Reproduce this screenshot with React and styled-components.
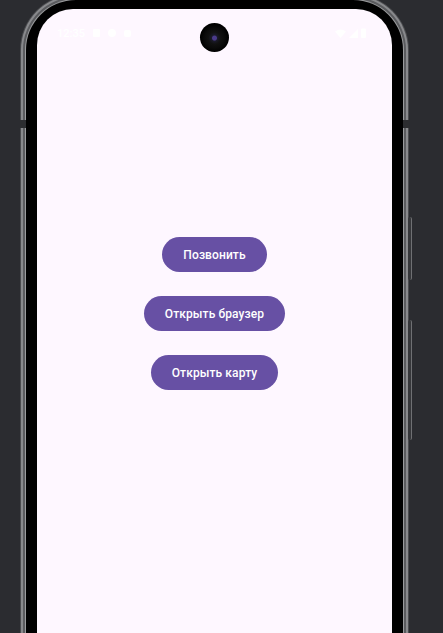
import React from "react";
import styled, { createGlobalStyle } from "styled-components";

const Global = createGlobalStyle`
  html, body { margin: 0; padding: 0; }
  body {
    background: #2b2c30;
    overflow: hidden;
    font-family: Roboto, "Noto Sans", sans-serif;
  }
`;

const Stage = styled.div`
  width: 443px;
  height: 633px;
  overflow: hidden;
  background: #2b2c30;
`;

const Bezel = styled.div`
  position: relative;
  margin-left: 26px;
  width: 377px;
  height: 700px;
  box-sizing: border-box;
  padding: 9px 11px 0 11px;
  background: #000;
  border-radius: 50px;
  box-shadow:
    0 0 0 1px #9a9b9d,
    0 0 0 3px #5a5b5e,
    0 0 0 5px #88898c,
    0 0 0 6px #4a4b4e;
`;

const AntennaBand = styled.div`
  position: absolute;
  top: 120px;
  width: 6px;
  height: 8px;
  background: #2c2d30;
  ${(p) => (p.$side === "left" ? "left: -6px;" : "right: -6px;")}
`;

const SideKey = styled.div`
  position: absolute;
  right: -9px;
  width: 3px;
  border-radius: 2px;
  background: #36373a;
  border-right: 1px solid #6f7073;
  top: ${(p) => p.$top}px;
  height: ${(p) => p.$h}px;
`;

const Screen = styled.div`
  position: relative;
  width: 355px;
  height: 700px;
  background: #fef7ff;
  border-radius: 36px 36px 0 0;
  overflow: hidden;
`;

const StatusBar = styled.div`
  height: 48px;
  box-sizing: border-box;
  padding: 17px 26px 0 20px;
  display: flex;
  align-items: flex-start;
  justify-content: space-between;
  color: #ffffff;
`;

const StatusGroup = styled.div`
  display: flex;
  align-items: center;
  gap: ${(p) => p.$gap}px;
  height: 14px;
`;

const Time = styled.span`
  font-family: Roboto, sans-serif;
  font-size: 11px;
  font-weight: 500;
  color: #ffffff;
`;

const Camera = styled.div`
  position: absolute;
  left: 50%;
  top: 14px;
  width: 29px;
  height: 29px;
  margin-left: -14.5px;
  border-radius: 50%;
  background: radial-gradient(circle at 50% 52%, #4a3a8a 0 2px, #1a1a2a 3px, #111 6px, #0a0a0a 10px, #000 14px);
`;

const Column = styled.div`
  display: flex;
  flex-direction: column;
  align-items: center;
  gap: 24px;
  padding-top: 180px;
`;

const PillButton = styled.button`
  height: 35px;
  padding: 0 21px;
  border: none;
  border-radius: 18px;
  background: #6750a4;
  color: #ffffff;
  font-family: Roboto, sans-serif;
  font-size: 12px;
  font-weight: 500;
  letter-spacing: 0.1px;
  cursor: pointer;
`;

const Icon = ({ children, w = 8, h = 8 }) => (
  <svg width={w} height={h} viewBox={`0 0 ${w} ${h}`} fill="#ffffff">
    {children}
  </svg>
);

export default function App() {
  return (
    <Stage>
      <Global />
      <Bezel>
        <AntennaBand $side="left" />
        <AntennaBand $side="right" />
        <SideKey $top={217} $h={63} />
        <SideKey $top={320} $h={120} />
        <Screen>
          <Camera />
          <StatusBar>
            <StatusGroup $gap={8}>
              <Time>12:35</Time>
              <Icon w={7} h={8}>
                <rect x="0" y="0" width="7" height="8" rx="1" />
              </Icon>
              <Icon w={8} h={8}>
                <circle cx="4" cy="4" r="4" />
              </Icon>
              <Icon w={7} h={8}>
                <rect x="0" y="1" width="7" height="7" rx="2" />
              </Icon>
            </StatusGroup>
            <StatusGroup $gap={3}>
              <Icon w={11} h={9}>
                <path d="M0 2.5 Q5.5 -1.5 11 2.5 L5.5 9 Z" />
              </Icon>
              <Icon w={9} h={9}>
                <path d="M9 0 L9 9 L0 9 Z" />
              </Icon>
              <Icon w={5} h={10}>
                <rect x="0" y="0.5" width="5" height="9.5" rx="1" />
              </Icon>
            </StatusGroup>
          </StatusBar>
          <Column>
            <PillButton>Позвонить</PillButton>
            <PillButton>Открыть браузер</PillButton>
            <PillButton>Открыть карту</PillButton>
          </Column>
        </Screen>
      </Bezel>
    </Stage>
  );
}
